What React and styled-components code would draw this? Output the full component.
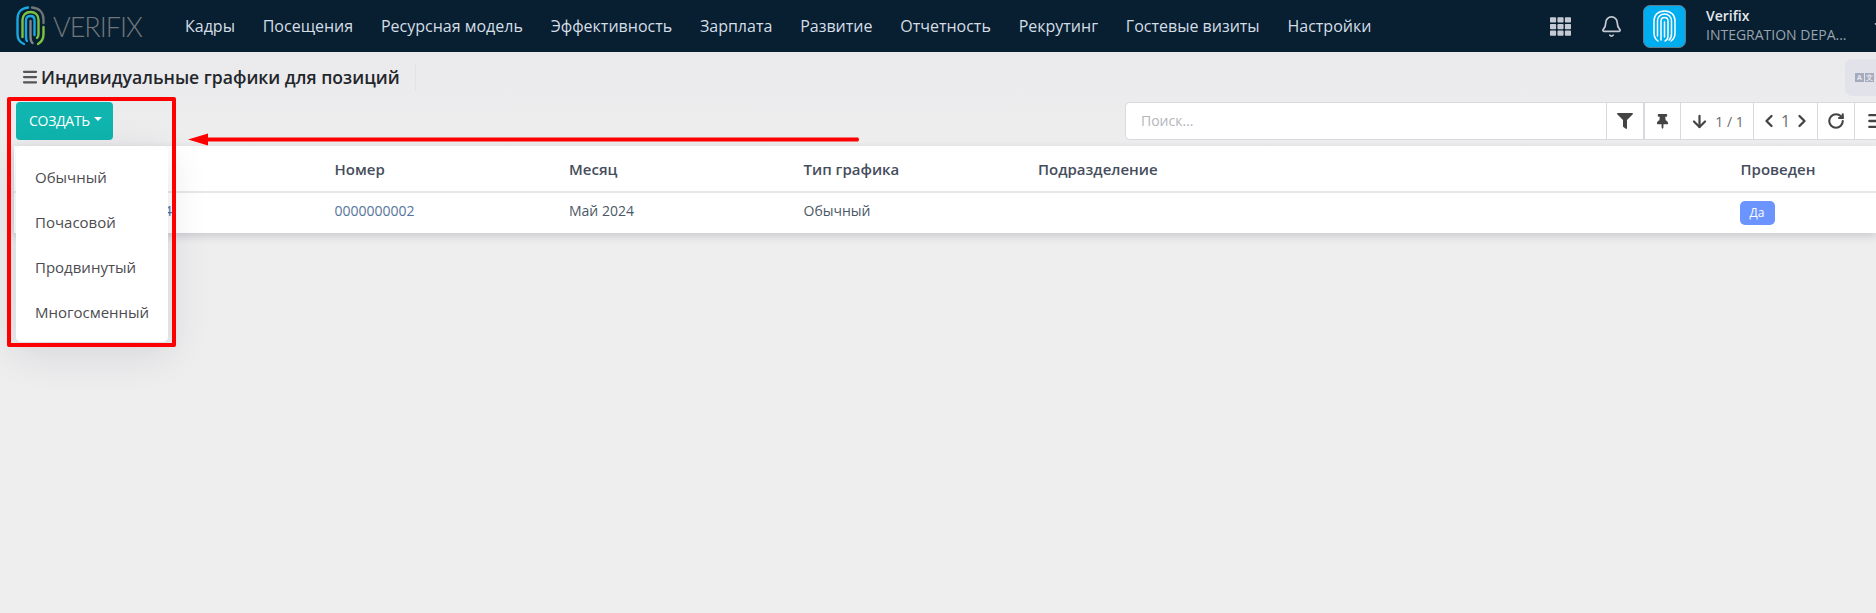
import React from 'react'
import styled, { createGlobalStyle } from 'styled-components';
import { ChevronDown, Bell, ArrowDown, ChevronLeft, ChevronRight, RotateCw, Menu } from 'lucide-react';
import { FaFilter, FaThumbtack, FaTh } from 'react-icons/fa';

const Global = createGlobalStyle`
    html, body { margin: 0; padding: 0; height: 100%; overflow: hidden; }
    body { font-family: "Open Sans", "Noto Sans", sans-serif; background: #eeeeef; }
`;

const Page = styled.div`
    position: relative;
    width: 1876px;
    height: 613px;
    overflow: hidden;
    background: linear-gradient(#e8e8eb, #ededee 130px, #eeeeef);
`;

const Navbar = styled.header`
    height: 52px;
    background: #071f30;
    display: flex;
    align-items: center;
    padding-left: 16px;
`;

const Brand = styled.div`
    display: flex;
    align-items: center;
    width: 169px;
    flex: none;
`;

const BrandName = styled.span`
    font-family: "Lato", sans-serif;
    font-weight: 300;
    font-size: 27px;
    letter-spacing: -1px;
    color: #71767a;
    margin-left: 8px;
`;

const NavList = styled.nav`
    display: flex;
    gap: 27.8px;
    flex: 1;
`;

const NavItem = styled.span`
    color: #d5dde6;
    font-size: 16px;
    white-space: nowrap;
`;

const NavRight = styled.div`
    display: flex;
    align-items: center;
    width: 326px;
    flex: none;
    color: #c5c9d4;

    & > svg {
        flex: none;
    }
`;

const Avatar = styled.div`
    width: 43px;
    height: 43px;
    flex: none;
    box-sizing: border-box;
    border-radius: 7px;
    background: #00aeef;
    border: 1px solid #5f7d90;
    display: flex;
    align-items: center;
    justify-content: center;
    margin-left: 20px;
`;

const UserBlock = styled.div`
    margin-left: 20px;
    margin-top: -3px;
    line-height: 19px;
    width: 165px;
    flex: none;
`;

const UserName = styled.div`
    font-size: 14px;
    font-weight: 600;
    color: #e4e8ee;
`;

const UserOrg = styled.div`
    font-size: 14px;
    color: #9aa3ae;
    white-space: nowrap;
`;

const TitleBar = styled.div`
    height: 50px;
    display: flex;
    align-items: center;
    padding-left: 21px;
    position: relative;
`;

const Title = styled.h1`
    margin: 0;
    font-size: 17.6px;
    font-weight: 600;
    color: #23262b;
    display: flex;
    align-items: center;
    gap: 2px;
    height: 26px;
    padding-right: 15px;
    border-right: 1px solid #e2e2e5;
`;

const LangTab = styled.div`
    position: absolute;
    top: 7px;
    right: 0;
    width: 31px;
    height: 37px;
    border-radius: 7px 0 0 7px;
    background: #e1e2ea;
    display: flex;
    gap: 1px;
    padding: 14px 0 0 10px;
    box-sizing: border-box;
`;

const LangKey = styled.span`
    width: 9px;
    height: 9px;
    flex: none;
    background: #a5abbd;
    color: #e8e9ef;
    font-size: 7px;
    line-height: 9px;
    text-align: center;
    font-weight: 700;
`;

const Controls = styled.div`
    display: flex;
    justify-content: space-between;
    align-items: flex-start;
    padding-left: 16px;
    height: 44px;
`;

const CreateWrap = styled.div`
    position: relative;
    z-index: 2;
`;

const CreateButton = styled.button`
    width: 97px;
    height: 38px;
    border: none;
    border-radius: 4px;
    background: #0fb5ae;
    color: #fff;
    font-family: inherit;
    font-size: 14px;
    letter-spacing: -0.3px;
    padding: 0 0 2px 2px;
    display: flex;
    align-items: center;
    justify-content: center;
    gap: 4px;
`;

const Caret = styled.span`
    width: 0;
    height: 0;
    border-left: 4px solid transparent;
    border-right: 4px solid transparent;
    border-top: 4px solid #fff;
    margin-top: -3px;
`;

const Dropdown = styled.ul`
    position: absolute;
    left: 0;
    top: 44px;
    width: 152px;
    height: 196px;
    margin: 0;
    padding: 8px 0;
    box-sizing: border-box;
    list-style: none;
    background: #fff;
    border-radius: 5px;
    box-shadow: 0 10px 40px rgba(30, 30, 50, 0.12);
`;

const DropdownItem = styled.li`
    height: 45px;
    display: flex;
    align-items: center;
    padding-left: 19px;
    font-size: 15px;
    color: #4c4c50;
`;

const SearchBar = styled.div`
    display: flex;
    width: 751px;
    height: 38px;
    box-sizing: border-box;
    border: 1px solid #d6d9de;
    border-right: none;
    border-radius: 5px 0 0 5px;
    background: #fff;
    flex: none;
`;

const SearchInput = styled.div`
    flex: 1;
    padding-left: 15px;
    font-size: 14px;
    line-height: 36px;
    color: #b4b6bc;
`;

const ToolCell = styled.div`
    width: ${(p) => p.$w}px;
    flex: none;
    display: flex;
    align-items: center;
    justify-content: ${(p) => (p.$start ? 'flex-start' : 'center')};
    padding-left: ${(p) => (p.$start ? 11 : 0)}px;
    gap: ${(p) => p.$gap || 0}px;
    border-left: ${(p) => (p.$thick ? 2 : 1)}px solid #d6d9de;
    color: #444;
    box-sizing: border-box;
`;

const Pager = styled.span`
    color: #6b6b72;
    font-size: ${(p) => p.$size || 14}px;
`;

const TableCard = styled.div`
    margin-left: 14px;
    background: #fff;
    box-shadow: 0 3px 8px rgba(40, 40, 60, 0.18);
`;

const Row = styled.div`
    display: grid;
    grid-template-columns: 320.5px 234.5px 234.5px 234.5px 702.5px 1fr;
    align-items: center;
    height: ${(p) => p.$h}px;
    box-sizing: border-box;
`;

const HeadRow = styled(Row)`
    border-bottom: 2px solid #e6e7ea;
`;

const HeadCell = styled.div`
    font-size: 15px;
    font-weight: 600;
    color: #454d5c;
`;

const Cell = styled.div`
    font-size: 14px;
    padding-bottom: 5px;
    color: ${(p) => p.$color || '#4c5866'};
`;

const HiddenDate = styled(Cell)`
    padding-left: 150px;
`;

const BadgeCell = styled.div`
    margin-left: -1px;
    display: flex;
`;

const Badge = styled.span`
    width: 35px;
    height: 24px;
    line-height: 24px;
    text-align: center;
    border-radius: 5px;
    background: #6c94ff;
    color: #fff;
    font-size: 12px;
`;

const RedFrame = styled.div`
    position: absolute;
    left: 7px;
    top: 97px;
    width: 169px;
    height: 250px;
    box-sizing: border-box;
    border: 4px solid #fe0000;
    border-radius: 2px;
    z-index: 3;
`;

const RedArrow = styled.svg`
    position: absolute;
    left: 188px;
    top: 133px;
    z-index: 3;
`;

const FingerPrint = () => (
    <svg width="23" height="33" viewBox="0 0 23 33" fill="none" stroke="#fff" strokeWidth="1.5" strokeLinecap="round">
        <path d="M5 31C2 29 1 27 1 23V11C1 5 5 1 11.500 1S22 5 22 11v12c0 4-1 6-4 8" />
        <path d="M4.500 26V11c0-4 3-7 7-7s7 3 7 7v13c0 3-1 5-2.500 6" />
        <path d="M8 30V11c0-2 1-3.500 3.500-3.500S15 9 15 11v15c0 2-1 4-3 5" />
        <path d="M11.500 12v15" />
    </svg>
);

const Logo = () => (
    <svg width="29" height="40" viewBox="0 0 29 40" fill="none" strokeWidth="2.400" strokeLinecap="round">
        <path d="M8 38C3 36 1.500 33 1.500 28V13C1.500 6 6 2 12 1.500" stroke="#1aa7e0" />
        <path d="M16 1.500c7 .5 11.500 5 11.500 12V17" stroke="#6f7478" />
        <path d="M27.500 21v7c0 5-2 8-5.500 10" stroke="#7fc241" />
        <path d="M6.500 31V14c0-5 3.500-8 8-8s8 3 8 8v14c0 2-.5 3-1.500 4" stroke="#7fc241" />
        <path d="M11 35c-1-1-1-3-1-5V14c0-3 2-4 4.500-4s4 1.500 4 4v15" stroke="#1aa7e0" />
        <path d="M14.500 15v15c0 3 .5 6 2 7" stroke="#80868a" />
    </svg>
);

const navItems = ['Кадры', 'Посещения', 'Ресурсная модель', 'Эффективность', 'Зарплата', 'Развитие', 'Отчетность', 'Рекрутинг', 'Гостевые визиты', 'Настройки'];
const createItems = ['Обычный', 'Почасовой', 'Продвинутый', 'Многосменный'];

export default function App() {
    return (
        <Page>
            <Global />
            <Navbar>
                <Brand>
                    <Logo />
                    <BrandName>VERIFIX</BrandName>
                </Brand>
                <NavList>
                    {navItems.map((item) => <NavItem key={item}>{item}</NavItem>)}
                </NavList>
                <NavRight>
                    <FaTh size={21} />
                    <Bell size={23} strokeWidth={1.8} style={{ marginLeft: 29 }} />
                    <Avatar><FingerPrint /></Avatar>
                    <UserBlock>
                        <UserName>Verifix</UserName>
                        <UserOrg>INTEGRATION DEPA...</UserOrg>
                    </UserBlock>
                    <ChevronDown size={18} />
                </NavRight>
            </Navbar>
            <TitleBar>
                <Title><Menu size={18} strokeWidth={3} color="#555" />Индивидуальные графики для позиций</Title>
                <LangTab><LangKey>A</LangKey><LangKey>文</LangKey></LangTab>
            </TitleBar>
            <Controls>
                <CreateWrap>
                    <CreateButton>СОЗДАТЬ<Caret /></CreateButton>
                    <Dropdown>
                        {createItems.map((item) => <DropdownItem key={item}>{item}</DropdownItem>)}
                    </Dropdown>
                </CreateWrap>
                <SearchBar>
                    <SearchInput>Поиск...</SearchInput>
                    <ToolCell $w={37}><FaFilter size={16} /></ToolCell>
                    <ToolCell $w={37} $thick><FaThumbtack size={15} /></ToolCell>
                    <ToolCell $w={73} $gap={6}><ArrowDown size={19} strokeWidth={2.8} /><Pager>1 / 1</Pager></ToolCell>
                    <ToolCell $w={64} $gap={2}><ChevronLeft size={20} strokeWidth={2.8} /><Pager $size={16}>1</Pager><ChevronRight size={20} strokeWidth={2.8} /></ToolCell>
                    <ToolCell $w={37}><RotateCw size={18} strokeWidth={2.8} /></ToolCell>
                    <ToolCell $w={22} $start><Menu size={20} strokeWidth={2.8} style={{ flex: 'none' }} /></ToolCell>
                </SearchBar>
            </Controls>
            <TableCard>
                <HeadRow $h={47}>
                    <HeadCell />
                    <HeadCell>Номер</HeadCell>
                    <HeadCell>Месяц</HeadCell>
                    <HeadCell>Тип графика</HeadCell>
                    <HeadCell>Подразделение</HeadCell>
                    <HeadCell>Проведен</HeadCell>
                </HeadRow>
                <Row $h={40}>
                    <HiddenDate $color="#3f6fa8">4</HiddenDate>
                    <Cell $color="#55739c">0000000002</Cell>
                    <Cell>Май 2024</Cell>
                    <Cell>Обычный</Cell>
                    <Cell />
                    <BadgeCell><Badge>Да</Badge></BadgeCell>
                </Row>
            </TableCard>
            <RedFrame />
            <RedArrow width="672" height="13" viewBox="0 0 672 13">
                <path d="M0 6.500 L20 0.500 V4.500 H670 Q672 6.500 670 8.500 H20 V12.500 Z" fill="#fe0000" />
            </RedArrow>
        </Page>
    );
}
